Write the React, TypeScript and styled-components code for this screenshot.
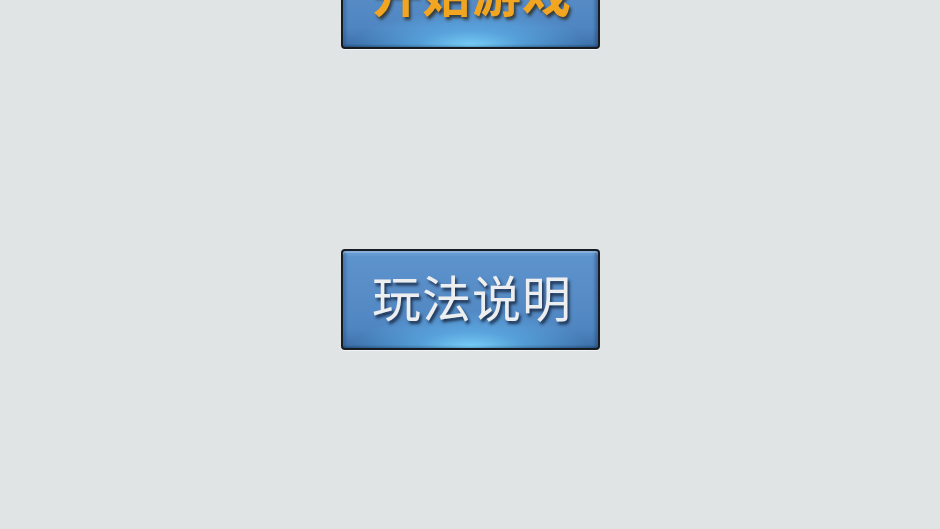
import React from "react";
import styled, { createGlobalStyle } from "styled-components";

const Global = createGlobalStyle`
  html, body {
    margin: 0;
    padding: 0;
    background: #e0e4e5;
    overflow: hidden;
  }
  body {
    font-family: "Noto Sans CJK SC", "Noto Sans", sans-serif;
  }
`;

const Page = styled.div`
  width: 940px;
  height: 529px;
  background: #e0e4e5;
  display: flex;
  flex-direction: column;
  align-items: center;
  overflow: hidden;
`;

const Stack = styled.div`
  display: flex;
  flex-direction: column;
  align-items: center;
  gap: 200px;
  margin-top: -52px;
`;

const Button = styled.button<{ $gold?: boolean }>`
  box-sizing: border-box;
  width: 259px;
  height: 101px;
  padding: 0 0 ${(p) => (p.$gold ? 16 : 9)}px 4px;
  border: 2px solid #171b22;
  border-radius: 4px;
  display: flex;
  align-items: center;
  justify-content: center;
  cursor: pointer;
  background:
    radial-gradient(ellipse 46% 38% at 50% 100%, rgba(125, 215, 255, 0.95) 0%, rgba(100, 190, 245, 0.55) 45%, rgba(90, 160, 220, 0) 100%),
    linear-gradient(180deg, #78a7dc 0%, #5d93cd 6%, #578cc6 45%, #4f86c2 80%, #3f73ad 97%, #2f5c8c 100%);
  box-shadow:
    inset 0 2px 0 rgba(160, 200, 240, 0.55),
    inset -3px 0 3px rgba(30, 60, 100, 0.45),
    inset 3px 0 3px rgba(30, 60, 100, 0.3),
    0 1px 0 rgba(255, 255, 255, 0.6);
  font-family: "Noto Sans CJK SC", "Noto Sans", sans-serif;
  font-size: 49px;
  font-weight: ${(p) => (p.$gold ? 700 : 400)};
  letter-spacing: 1px;
  line-height: 1;
  color: ${(p) => (p.$gold ? "#f2a520" : "#eceef0")};
  text-shadow: ${(p) =>
    p.$gold
      ? "2px 3px 3px rgba(40, 30, 10, 0.7)"
      : "2px 3px 3px rgba(20, 35, 60, 0.85)"};
`;

export default function App() {
  return (
    <>
      <Global />
      <Page>
        <Stack>
          <Button $gold>开始游戏</Button>
          <Button>玩法说明</Button>
        </Stack>
      </Page>
    </>
  );
}
